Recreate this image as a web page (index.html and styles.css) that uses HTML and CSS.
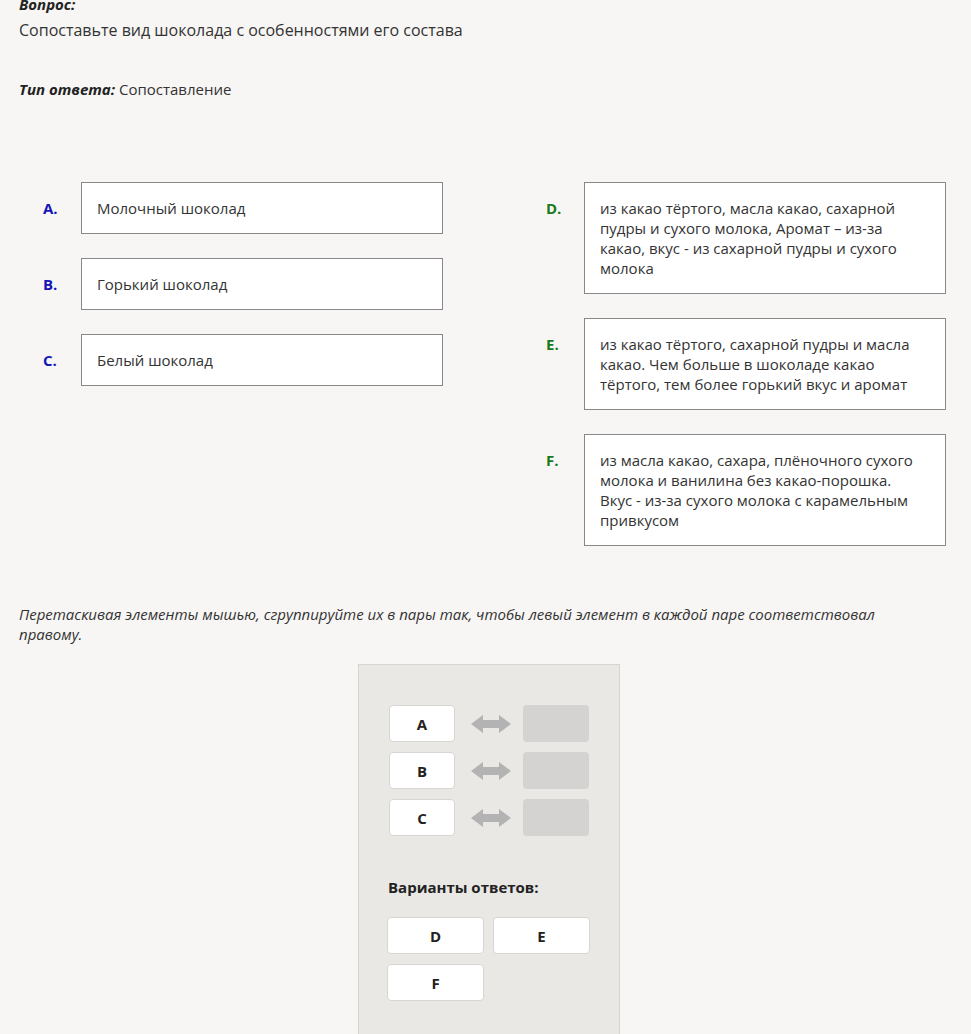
FILE: index.html
```html
<!DOCTYPE html>
<html lang="ru">
<head>
    <meta charset="UTF-8">
    <meta name="viewport" content="width=device-width, initial-scale=1.0">
    <title>Сопоставление</title>
    <link rel="stylesheet" href="styles.css">
</head>
<body>
    <div class="page">
        <div class="q-head"><em>Вопрос:</em></div>
        <div class="q-text">Сопоставьте вид шоколада с особенностями его состава</div>
        <div class="q-type"><em>Тип ответа:</em> Сопоставление</div>

        <div class="pairs">
            <div class="col">
                <div class="item"><span class="mark left">A.</span><div class="card">Молочный шоколад</div></div>
                <div class="item"><span class="mark left">B.</span><div class="card">Горький шоколад</div></div>
                <div class="item"><span class="mark left">C.</span><div class="card">Белый шоколад</div></div>
            </div>
            <div class="col">
                <div class="item"><span class="mark right">D.</span><div class="card">из какао тёртого, масла какао, сахарной пудры и сухого молока, Аромат – из-за какао, вкус - из сахарной пудры и сухого молока</div></div>
                <div class="item"><span class="mark right">E.</span><div class="card">из какао тёртого, сахарной пудры и масла какао. Чем больше в шоколаде какао тёртого, тем более горький вкус и аромат</div></div>
                <div class="item"><span class="mark right">F.</span><div class="card">из масла какао, сахара, плёночного сухого молока и ванилина без какао-порошка. Вкус - из-за сухого молока с карамельным привкусом</div></div>
            </div>
        </div>

        <p class="hint">Перетаскивая элементы мышью, сгруппируйте их в пары так, чтобы левый элемент в каждой паре соответствовал правому.</p>

        <div class="board">
            <div class="rows">
                <div class="row"><div class="chip">A</div><svg class="arrow" viewBox="0 0 40 20"><polygon points="0,10 12,1 12,6 28,6 28,1 40,10 28,19 28,14 12,14 12,19"/></svg><div class="slot"></div></div>
                <div class="row"><div class="chip">B</div><svg class="arrow" viewBox="0 0 40 20"><polygon points="0,10 12,1 12,6 28,6 28,1 40,10 28,19 28,14 12,14 12,19"/></svg><div class="slot"></div></div>
                <div class="row"><div class="chip">C</div><svg class="arrow" viewBox="0 0 40 20"><polygon points="0,10 12,1 12,6 28,6 28,1 40,10 28,19 28,14 12,14 12,19"/></svg><div class="slot"></div></div>
            </div>
            <div class="variants-title">Варианты ответов:</div>
            <div class="variants">
                <div class="chip wide">D</div>
                <div class="chip wide">E</div>
                <div class="chip wide">F</div>
            </div>
        </div>
    </div>
</body>
</html>
```

FILE: styles.css
```css
*{margin:0;padding:0;box-sizing:border-box}
body{background:#f7f6f4;font-family:"Open Sans",Arial,sans-serif;font-size:15px;line-height:20px;color:#333}
.page{padding:0 0 0 19px;margin-top:-6px}
.q-head em,.q-type em{font-weight:700;font-style:italic;color:#222}
.q-text{margin-top:5px;font-size:16px;line-height:22px}
.q-type{margin-top:38px}
.pairs{display:flex;gap:103px;margin-top:83px;padding-left:24px}
.col{display:flex;flex-direction:column;gap:24px;width:400px}
.item{display:flex}
.mark{width:38px;flex:none;padding-top:16px;font-weight:700;font-size:15px}
.mark.left{color:#1515b8}
.mark.right{color:#1a7a1a}
.card{width:362px;background:#fff;border:1px solid #888;padding:15px 20px 15px 15px;min-height:52px}
.hint{margin-top:58px;font-style:italic;color:#333;width:920px}
.board{margin:20px 0 0 339px;width:262px;height:400px;background:#e9e8e5;border:1px solid #d6d5d2;padding:40px 30px 0 28px}
.rows{display:flex;flex-direction:column;gap:10px;padding-left:2px}
.row{display:flex;align-items:center}
.chip{width:66px;height:37px;background:#fff;border:1px solid #d8d6d2;border-radius:4px;display:flex;align-items:center;justify-content:center;font-weight:700;color:#222}
.arrow{width:40px;height:20px;margin:0 12px 0 16px;fill:#b3b3b3}
.slot{width:66px;height:37px;background:#d4d3d1;border-radius:4px}
.variants-title{margin-top:41px;font-weight:700;color:#222;padding-left:1px}
.variants{display:flex;flex-wrap:wrap;gap:10px 9px;margin-top:20px;width:204px}
.chip.wide{width:97px}
```
